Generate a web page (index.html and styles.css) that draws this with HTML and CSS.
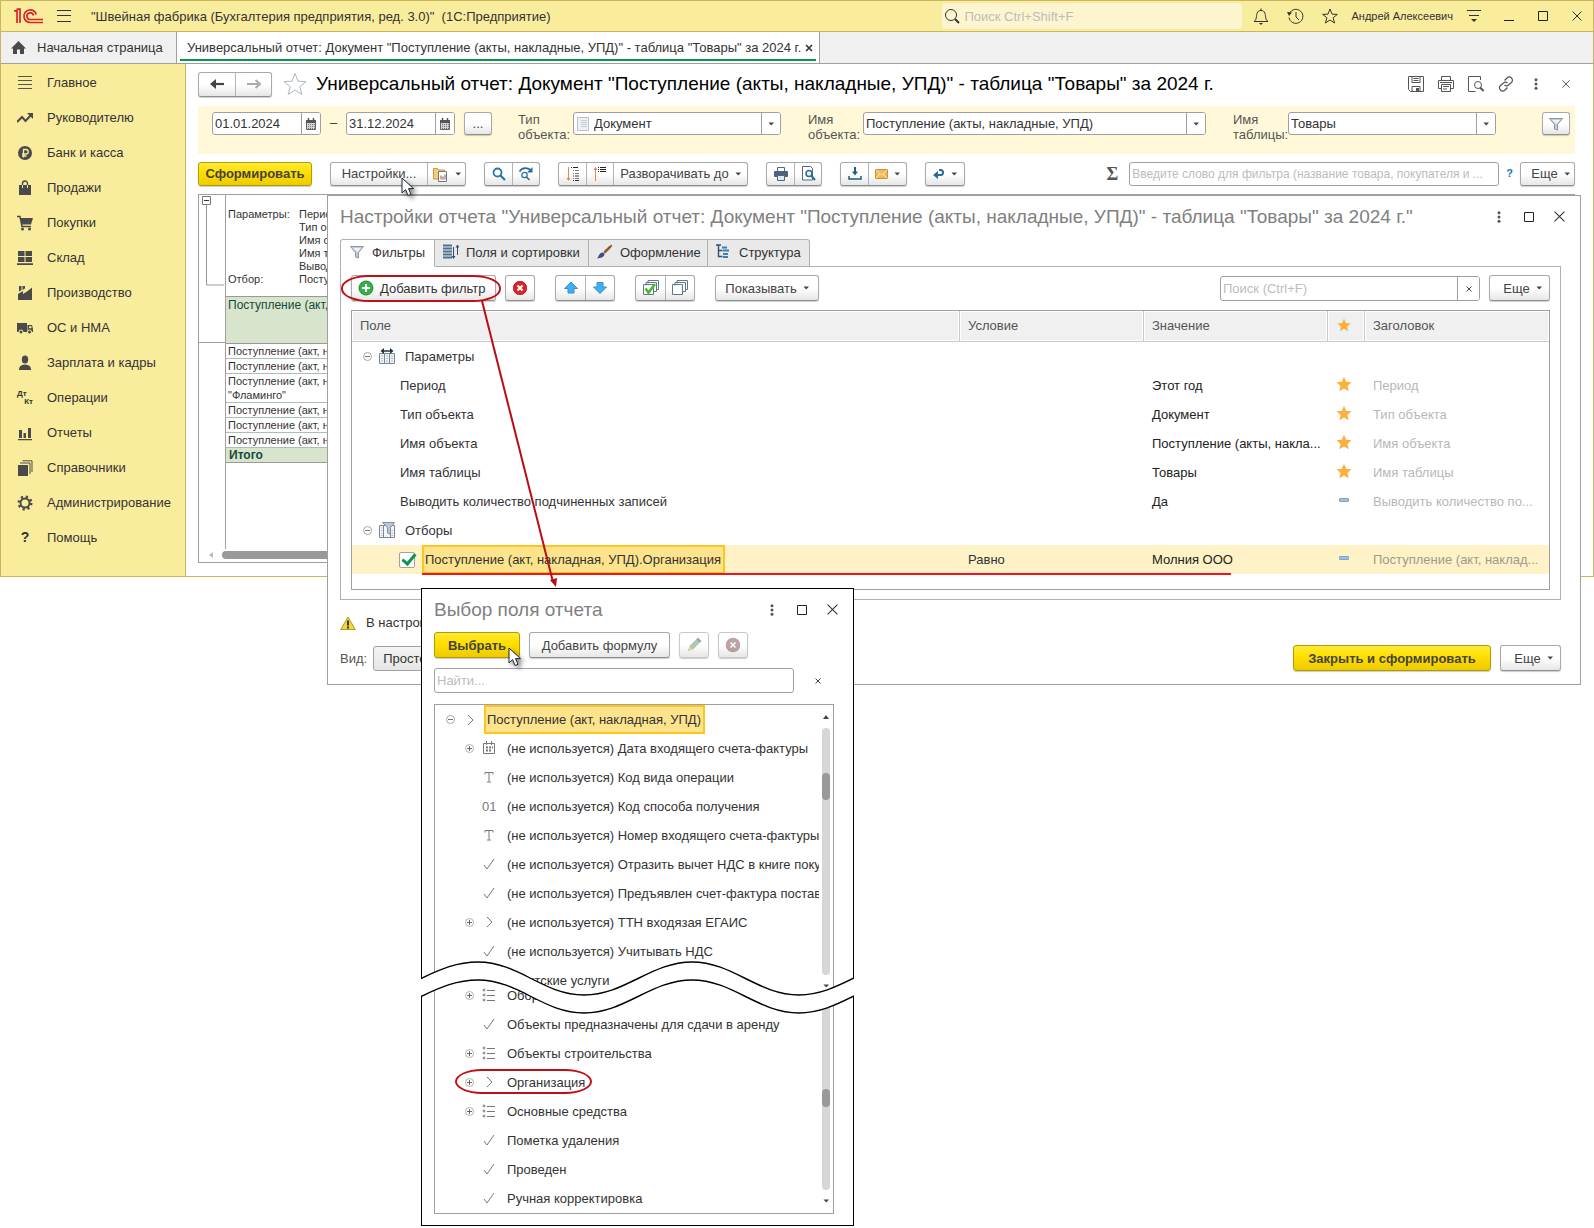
FILE: index.html
```html
<!DOCTYPE html>
<html lang="ru">
<head>
<meta charset="utf-8">
<meta name="viewport" content="width=device-width, initial-scale=1">
<title>Швейная фабрика (Бухгалтерия предприятия, ред. 3.0)</title>
<link rel="stylesheet" href="styles.css">
</head>
<body>
<svg class="sprite" aria-hidden="true">
  <symbol id="caret" viewBox="0 0 6 4"><path d="M.5.500h5.500L3.200 3.500z" fill="#444"/></symbol>
  <symbol id="up" viewBox="0 0 6 4"><path d="M0 4h6L3 0z" fill="#444"/></symbol>
  <symbol id="calendar" viewBox="0 0 12 12"><path d="M1.500 2.500h9v9h-9z" fill="#d4d4d4" stroke="#666"/><path d="M1 2h10v3H1z" fill="#555"/><path d="M3.500 0v3M8.500 0v3" stroke="#555" stroke-width="1.500"/><path d="M3 6.500h7M3 8.500h7M3 10.500h7" stroke="#777" stroke-dasharray="1 1"/></symbol>
  <symbol id="funnel" viewBox="0 0 16 16"><path d="M1.500 2.500h13l-5 6V14l-3-1V8.500z" fill="#c3ccd6" stroke="#8b96a1"/><path d="M4 4h8L8.500 8z" fill="#eef2f6"/></symbol>
  <symbol id="goldstar" viewBox="0 0 16 16"><path d="M8 .8l2.200 5 5.300.500-4 3.600 1.200 5.300L8 12.400l-4.700 2.800 1.200-5.300-4-3.600 5.300-.500z" fill="#fbb040"/></symbol>
  <symbol id="star" viewBox="0 0 24 24"><path d="M12 1.500l3 7.700 8 .4-6.300 5.100 2.200 7.800L12 18l-6.900 4.500 2.200-7.800L1 9.600l8-.4z" fill="none" stroke="currentColor"/></symbol>
  <symbol id="dash" viewBox="0 0 10 4"><rect x=".5" y=".5" width="9" height="3" rx=".5" fill="#9dc3ea" stroke="#7da3c8"/></symbol>
  <symbol id="minus" viewBox="0 0 9 9"><circle cx="4.500" cy="4.500" r="4" fill="none" stroke="#a6a6a6"/><path d="M2 4.500h5" stroke="#777"/></symbol>
  <symbol id="plus" viewBox="0 0 9 9"><circle cx="4.500" cy="4.500" r="4" fill="none" stroke="#b0b0b0"/><path d="M2 4.500h5M4.500 2v5" stroke="#666"/></symbol>
  <symbol id="chevron" viewBox="0 0 14 14"><path d="M5 2l5 5-5 5" fill="none" stroke="#777"/></symbol>
  <symbol id="tick" viewBox="0 0 14 14"><path d="M2 8l3 4 7-10" fill="none" stroke="#777"/></symbol>
  <symbol id="letter" viewBox="0 0 14 14"><path d="M3 4.500v-2h8v2M7 2.500v9M5 12h4" fill="none" stroke="#777"/></symbol>
  <symbol id="list" viewBox="0 0 14 14"><path d="M5 2.500h8M5 7.500h8M5 12.500h8" stroke="#777"/><g fill="none" stroke="#777"><circle cx="2" cy="2" r="1"/><circle cx="2" cy="7" r="1"/><circle cx="2" cy="12" r="1"/></g></symbol>
  <symbol id="date" viewBox="0 0 14 14"><path d="M1.500 2.500h11v10h-11zM4.500 0v4M9.500 0v4" fill="none" stroke="#777"/><path d="M4 6.500h7M4 9.500h5" stroke="#777" stroke-width="2" stroke-dasharray="2 1"/></symbol>
  <symbol id="dots" viewBox="0 0 4 12"><g fill="#555"><circle cx="2" cy="1.700" r="1.500"/><circle cx="2" cy="6" r="1.500"/><circle cx="2" cy="10.300" r="1.500"/></g></symbol>
  <symbol id="box" viewBox="0 0 10 10"><path d="M.5.5h9v9h-9z" fill="none" stroke="#222"/></symbol>
  <symbol id="cross" viewBox="0 0 10 10"><path d="M.5.5l9 9M9.500.5l-9 9" stroke="#333"/></symbol>
  <symbol id="clear" viewBox="0 0 6 6"><path d="M.5.5l5 5M5.500.5l-5 5" stroke="#444"/></symbol>
  <symbol id="bin" viewBox="0 0 16 16"><circle cx="8" cy="8" r="7" fill="#d8252e"/><circle cx="8" cy="8" r="6.600" fill="none" stroke="#b81d25" stroke-width=".8"/><path d="M5.500 5.500l5 5m0-5l-5 5" stroke="#fff" stroke-width="2"/></symbol>
  <symbol id="cursor" viewBox="0 0 13 20"><path d="M1 1v15l3.600-3.400L7 18.500l3-1.200-2.500-5.700h5z" fill="#fff" stroke="#1c2338"/></symbol>
</svg>

<div class="desktop">
  <div class="app">
    <header class="topbar">
      <svg class="logo" viewBox="0 0 30 16"><g fill="none" stroke="#d8232a" stroke-width="1.700"><path d="M0 2.800h3V15M2.500 1.200H6V15"/><path d="M22.300 6.500A6.300 6.300 0 1 0 16.500 14.500H29"/><path d="M19.500 7.500A3.300 3.300 0 1 0 16.500 11.500H29"/></g></svg>
      <button class="plain" aria-label="Меню"><svg width="14" height="12" viewBox="0 0 14 12"><path d="M0 .5h14M0 5.500h14M0 11.500h14" stroke="#333"/></svg></button>
      <span class="apptitle">"Швейная фабрика (Бухгалтерия предприятия, ред. 3.0)"&nbsp; (1С:Предприятие)</span>
      <label class="topsearch"><svg width="16" height="16" viewBox="0 0 16 16"><circle cx="7" cy="7" r="5.500" fill="none" stroke="#333"/><path d="M11 11l4 4" stroke="#333" stroke-width="2"/></svg><input type="text" placeholder="Поиск Ctrl+Shift+F" aria-label="Поиск"></label>
      <button class="plain" aria-label="Уведомления"><svg width="16" height="17" viewBox="0 0 16 17"><path d="M1 13.500c3-2 2-5 3-8C4.800 3 6 2.500 8 2.500s3.200.500 4 3c1 3 0 6 3 8z" fill="none" stroke="#333"/><path d="M8 .5v2" stroke="#333"/><path d="M6 15h4l-2 2z" fill="#333"/></svg></button>
      <button class="plain" aria-label="История"><svg width="17" height="17" viewBox="0 0 17 17"><path d="M2.500 5.500a7 7 0 1 1-.5 4M9 4v5l3 3" fill="none" stroke="#333"/><path d="M0 4l5 .5-3 3.500z" fill="#333"/></svg></button>
      <button class="plain" aria-label="Избранное"><svg width="16" height="16" viewBox="0 0 24 24"><path d="M12 1.500l3 7.700 8 .4-6.300 5.100 2.200 7.800L12 18l-6.900 4.500 2.200-7.800L1 9.600l8-.4z" fill="none" stroke="#333" stroke-width="1.500"/></svg></button>
      <a class="user" href="#">Андрей Алексеевич</a>
      <button class="plain" aria-label="Настройки окна"><svg width="14" height="12" viewBox="0 0 14 12"><path d="M0 .5h14M2 5.500h10" stroke="#333"/><path d="M4 9h6l-3 3z" fill="#333"/></svg></button>
      <div class="winbtns">
        <button class="plain" aria-label="Свернуть"><svg width="10" height="10" viewBox="0 0 10 10"><path d="M0 9.500h10" stroke="#222"/></svg></button>
        <button class="plain" aria-label="Развернуть"><svg width="10" height="10"><use href="#box"/></svg></button>
        <button class="plain" aria-label="Закрыть"><svg width="10" height="10"><use href="#cross"/></svg></button>
      </div>
    </header>

    <nav class="tabs">
      <a class="tab home" href="#"><svg width="15" height="14" viewBox="0 0 15 14"><path d="M7.500 0L0 7.500h2V13h4V8.500h3V13h4V7.500h2z" fill="#4a4a4a"/></svg>Начальная страница</a>
      <a class="tab active" href="#"><span>Универсальный отчет: Документ "Поступление (акты, накладные, УПД)" - таблица "Товары" за 2024 г.</span><svg width="8" height="8" viewBox="0 0 8 8"><path d="M1 1l6 6M7 1L1 7" stroke="#333" stroke-width="1.600"/></svg></a>
    </nav>

    <div class="work">
      <nav class="sidebar">
        <a href="#"><svg viewBox="0 0 16 16"><path d="M1 1.500h14M1 5.500h14M1 9.500h14M1 13.500h14" stroke="#555"/></svg>Главное</a>
        <a href="#"><svg viewBox="0 0 16 16"><path d="M0 12l5-5 3.500 4L14 5" fill="none" stroke="#4a4a4a" stroke-width="2"/><path d="M10 3h6v6z" fill="#4a4a4a"/></svg>Руководителю</a>
        <a href="#"><svg viewBox="0 0 16 16"><circle cx="8" cy="8" r="7" fill="#4a4a4a"/><path d="M6.500 12.500V4.500H9a2.200 2.200 0 0 1 0 4.500H5M5 11h4.500" fill="none" stroke="#faec9d" stroke-width="1.300"/></svg>Банк и касса</a>
        <a href="#"><svg viewBox="0 0 16 16"><path d="M2 5h12v10H2z" fill="#4a4a4a"/><path d="M5.500 5V3.500a2.500 2.500 0 0 1 5 0V5" fill="none" stroke="#4a4a4a" stroke-width="1.400"/><path d="M5.500 5v3M10.500 5v3" stroke="#faec9d"/></svg>Продажи</a>
        <a href="#"><svg viewBox="0 0 16 16"><path d="M0 1.500h3l2 10h9" fill="none" stroke="#4a4a4a" stroke-width="1.500"/><path d="M3 3h13l-2 6.500H4.500z" fill="#4a4a4a"/><circle cx="5.500" cy="14" r="1.500" fill="#4a4a4a"/><circle cx="12.500" cy="14" r="1.500" fill="#4a4a4a"/></svg>Покупки</a>
        <a href="#"><svg viewBox="0 0 16 16"><path d="M1 1h6.500v5H1zM8.500 1H15v5H8.500zM1 7h6.500v5H1zM8.500 7H15v5H8.500zM0 13.300h16V15H0z" fill="#4a4a4a"/></svg>Склад</a>
        <a href="#"><svg viewBox="0 0 16 16"><path d="M1 15V9l5-3v3l4-2.500 5-4V15zM2 1h2.500v4L2 6.500zM5.500 1H8v2.500L5.500 5z" fill="#4a4a4a"/></svg>Производство</a>
        <a href="#"><svg viewBox="0 0 16 16"><path d="M0 3h10v9H0zM10.500 5H15l1 4v3h-5.500z" fill="#4a4a4a"/><path d="M12 6.200h2.500v2H12z" fill="#faec9d"/><circle cx="4" cy="12" r="2" fill="#4a4a4a" stroke="#faec9d"/><circle cx="12.500" cy="12" r="2" fill="#4a4a4a" stroke="#faec9d"/></svg>ОС и НМА</a>
        <a href="#"><svg viewBox="0 0 16 16"><ellipse cx="8" cy="4.500" rx="3.200" ry="4" fill="#4a4a4a"/><path d="M2 15c0-4 2-5 6-5.500 4 .500 6 1.500 6 5.500z" fill="#4a4a4a"/></svg>Зарплата и кадры</a>
        <a href="#"><span class="dtkt"><b>Дт</b><b>Кт</b></span>Операции</a>
        <a href="#"><svg viewBox="0 0 16 16"><path d="M1 14h14v1.300H1zM2 5h3v8H2zM6.500 8h2.500v5H6.500zM11 3h3v10h-3z" fill="#4a4a4a"/></svg>Отчеты</a>
        <a href="#"><svg viewBox="0 0 16 16"><path d="M1 5h10v11H1z" fill="#4a4a4a"/><path d="M3 3h10v11M5.500 .8H15V12" fill="none" stroke="#4a4a4a"/></svg>Справочники</a>
        <a href="#"><svg viewBox="0 0 16 16"><circle cx="8" cy="8" r="4.500" fill="none" stroke="#4a4a4a" stroke-width="2"/><circle cx="8" cy="8" r="6.300" fill="none" stroke="#4a4a4a" stroke-width="2.400" stroke-dasharray="2.200 2.750"/></svg>Администрирование</a>
        <a href="#"><span class="help">?</span>Помощь</a>
      </nav>

      <main class="form">
        <div class="formhead">
          <div class="group nav"><button aria-label="Назад"><svg width="14" height="10" viewBox="0 0 14 10"><path d="M14 5H3" stroke="#444" stroke-width="2.200"/><path d="M6 0v10L0 5z" fill="#444"/></svg></button><button aria-label="Вперед"><svg width="14" height="10" viewBox="0 0 14 10"><path d="M0 5h11" stroke="#aaa" stroke-width="2"/><path d="M8.500 1l4.500 4-4.500 4" fill="none" stroke="#aaa" stroke-width="2"/></svg></button></div>
          <button class="plain fav" aria-label="В избранное"><svg width="24" height="24"><use href="#star"/></svg></button>
          <h1>Универсальный отчет: Документ "Поступление (акты, накладные, УПД)" - таблица "Товары" за 2024 г.</h1>
          <div class="headtools">
            <button class="plain" aria-label="Сохранить"><svg width="16" height="16" viewBox="0 0 16 16"><g fill="none" stroke="#555"><path d="M.5.500h15v15H2.500l-2-2zM4 .5v6h8v-6M5.500 2.500h5M5.500 4.500h5M4 15.500v-5h8v5"/></g><path d="M8 12h3v3H8z" fill="#555"/></svg></button>
            <button class="plain" aria-label="Печать"><svg width="16" height="16" viewBox="0 0 16 16"><g fill="none" stroke="#555"><path d="M3.500 4.500v-4h9v4M3.500 12.500h-3v-8h15v8h-3M3.500 8.500h9v7h-9zM2 6.500h12M5 10.500h6M5 13h4"/></g></svg></button>
            <button class="plain" aria-label="Просмотр"><svg width="16" height="16" viewBox="0 0 16 16"><g fill="none" stroke="#555"><path d="M12.500 4V.500H.500v15h7"/><circle cx="10" cy="9" r="3.500"/></g><path d="M12 11.500l3.500 3.500" stroke="#555" stroke-width="2"/></svg></button>
            <button class="plain" aria-label="Ссылка"><svg width="16" height="16" viewBox="0 0 16 16"><g fill="none" stroke="#555" stroke-width="1.200"><path d="M6.500 4.500L9 2a3 3 0 0 1 4.500 4.500L10.500 9a3 3 0 0 1-4 0"/><path d="M9.500 11.500L7 14a3 3 0 0 1-4.500-4.500L5.500 7a3 3 0 0 1 4 0"/></g></svg></button>
            <button class="plain" aria-label="Еще"><svg width="4" height="12"><use href="#dots"/></svg></button>
            <button class="plain" aria-label="Закрыть"><svg width="8" height="8"><use href="#cross"/></svg></button>
          </div>
        </div>

        <div class="band">
          <div class="field date"><input type="text" value="01.01.2024" aria-label="Начало периода"><span class="drop"><svg width="12" height="12"><use href="#calendar"/></svg></span></div>
          <span class="until">–</span>
          <div class="field date"><input type="text" value="31.12.2024" aria-label="Конец периода"><span class="drop"><svg width="12" height="12"><use href="#calendar"/></svg></span></div>
          <button class="btn small">...</button>
          <label class="lbl" for="otype">Тип объекта:</label>
          <div class="field type"><svg class="doc" width="12" height="14" viewBox="0 0 12 14"><path d="M.5.500h11v13H.500z" fill="#eef0f5" stroke="#b9c3cf"/><path d="M4 3.500h6M4 5.500h6M4 7.500h6M4 9.500h6" stroke="#c3ccd8"/></svg><select id="otype"><option>Документ</option></select><span class="drop"><svg width="6" height="4"><use href="#caret"/></svg></span></div>
          <label class="lbl" for="oname">Имя объекта:</label>
          <div class="field name"><select id="oname"><option>Поступление (акты, накладные, УПД)</option></select><span class="drop"><svg width="6" height="4"><use href="#caret"/></svg></span></div>
          <label class="lbl" for="tname">Имя таблицы:</label>
          <div class="field tbl"><select id="tname"><option>Товары</option></select><span class="drop"><svg width="6" height="4"><use href="#caret"/></svg></span></div>
          <button class="btn small last" aria-label="Фильтр"><svg width="16" height="16"><use href="#funnel"/></svg></button>
        </div>

        <div class="tools">
          <button class="btn primary run">Сформировать</button>
          <div class="group"><button class="w96">Настройки...<svg class="cursor" width="13" height="20"><use href="#cursor"/></svg></button><button class="w38" aria-label="Варианты"><svg width="16" height="16" viewBox="0 0 16 16"><path d="M.5 2.500h4l1 1.500h6v9H.500z" fill="#f3cd78" stroke="#c79a45"/><path d="M5.500 5.500h8v10h-8z" fill="#fff" stroke="#777"/><path d="M8 13.500v-4M10 13.500v-3" stroke="#c33"/><path d="M12 13.500v-5" stroke="#37a"/></svg><svg width="6" height="4"><use href="#caret"/></svg></button></div>
          <div class="group"><button class="w27" aria-label="Найти"><svg width="14" height="14" viewBox="0 0 14 14"><circle cx="5.500" cy="5.500" r="4" fill="none" stroke="#2a74a8" stroke-width="1.800"/><path d="M8.500 8.500l4.500 4.500" stroke="#2a74a8" stroke-width="2.200"/></svg></button><button class="w27" aria-label="Найти далее"><svg width="16" height="16" viewBox="0 0 16 16"><path d="M1.500 5.500c3-4.500 8-4 11-1.500" fill="none" stroke="#2a6a98" stroke-width="1.800"/><path d="M14.500 1v5.500H9z" fill="#2a6a98"/><circle cx="6.500" cy="9" r="2.700" fill="none" stroke="#2a6a98" stroke-width="1.200"/><path d="M8.500 11l3 3" stroke="#2a6a98" stroke-width="1.500"/></svg></button></div>
          <div class="group"><button class="w27" aria-label="Развернуть группы"><svg width="14" height="16" viewBox="0 0 14 16"><path d="M2.500 1v12" stroke="#f0804f"/><path d="M.5 12l2 3 2-3z" fill="#f0804f"/><path d="M5 1.500h1m1 0h5" stroke="#222"/><path d="M7 4.500h1m1 0h4M7 7.500h1m1 0h4M7 12.500h1m1 0h4" stroke="#777"/><path d="M7 10h1m1 0h4M7 14.500h1m1 0h4" stroke="#333"/></svg></button><button class="w27" aria-label="Свернуть группы"><svg width="14" height="16" viewBox="0 0 14 16"><path d="M2.500 3v12" stroke="#f0804f"/><path d="M.5 4l2-3 2 3z" fill="#f0804f"/><path d="M5 1.500h1m1 0h6M5 3.500h1m1 0h6M5 5.500h1m1 0h6" stroke="#222"/></svg></button><button class="w134">Разворачивать до<svg width="6" height="4"><use href="#caret"/></svg></button></div>
          <div class="group"><button class="w27" aria-label="Печать"><svg width="14" height="14" viewBox="0 0 14 14"><path d="M3.500.500h7v4h-7z" fill="#fff" stroke="#567"/><rect y="4" width="14" height="6" rx="1" fill="#4a6480"/><path d="M3.500 8.500h7v5h-7z" fill="#dfe9f3" stroke="#567"/></svg></button><button class="w27" aria-label="Предпросмотр"><svg width="15" height="15" viewBox="0 0 15 15"><path d="M1.500.500h8l2 2V14h-10z" fill="#fff" stroke="#567"/><circle cx="8" cy="7.500" r="3" fill="#e8f2fa" stroke="#2a6a98" stroke-width="1.500"/><path d="M10 9.500l4 4.500" stroke="#2a6a98" stroke-width="2"/></svg></button></div>
          <div class="group"><button class="w27" aria-label="Сохранить"><svg width="14" height="13" viewBox="0 0 14 13"><path d="M7 0v6" stroke="#1f5b87" stroke-width="2"/><path d="M1 9v3h12V9" fill="none" stroke="#1f5b87" stroke-width="1.500"/><path d="M4 4.500h6L7 8.500z" fill="#1f5b87"/></svg></button><button class="w38" aria-label="Отправить"><svg width="13" height="10" viewBox="0 0 13 10"><path d="M.5.500h12v9H.500z" fill="#f3b95d" stroke="#cf8f35"/><path d="M.5.500L6.500 6l6-5.500M.5 9.500L5 5M12.500 9.500L8 5" fill="none" stroke="#fbe3b4"/></svg><svg width="6" height="4"><use href="#caret"/></svg></button></div>
          <div class="group"><button class="w38" aria-label="Назад"><svg width="12" height="12" viewBox="0 0 12 12"><path d="M3 7h4.500a2.500 2.500 0 0 0 0-5H6" fill="none" stroke="#2a6a98" stroke-width="2"/><path d="M5 3v8L0 7z" fill="#2a6a98"/></svg><svg width="6" height="4"><use href="#caret"/></svg></button></div>
          <span class="sigma">Σ</span>
          <div class="field find"><input type="text" placeholder="Введите слово для фильтра (название товара, покупателя и ..." aria-label="Фильтр"></div>
          <a class="qm" href="#">?</a>
          <button class="btn more">Еще<svg width="6" height="4"><use href="#caret"/></svg></button>
        </div>

        <section class="report">
          <div class="outline"><svg width="25" height="148" viewBox="0 0 25 148"><path d="M3.500 1.500h8v8h-8z" fill="#fff" stroke="#777"/><path d="M5 5.500h5" stroke="#333"/><path d="M7.500 10v80H25" fill="none" stroke="#999"/></svg></div>
          <div class="sheet">
            <dl class="params">
              <dt>Параметры:</dt><dd>Период</dd><dd>Тип объекта</dd><dd>Имя объекта</dd><dd>Имя таблицы</dd><dd>Выводить</dd>
              <dt>Отбор:</dt><dd>Поступление</dd>
            </dl>
            <table class="data">
              <thead><tr><th>Поступление (акт, накладная, УПД)</th></tr></thead>
              <tbody>
                <tr><td>Поступление (акт, накладная, УПД)</td></tr>
                <tr><td>Поступление (акт, накладная, УПД)</td></tr>
                <tr><td>Поступление (акт, накладная, УПД)<br>"Фламинго"</td></tr>
                <tr><td>Поступление (акт, накладная, УПД)</td></tr>
                <tr><td>Поступление (акт, накладная, УПД)</td></tr>
                <tr><td>Поступление (акт, накладная, УПД)</td></tr>
              </tbody>
              <tfoot><tr><td>Итого</td></tr></tfoot>
            </table>
          </div>
          <div class="hscroll"><svg width="4" height="6" viewBox="0 0 4 6"><path d="M4 0v6L0 3z" fill="#bbb"/></svg><i></i></div>
        </section>
      </main>
    </div>
  </div>

  <section class="dialog settings" role="dialog" aria-label="Настройки отчета">
    <div class="dlghead">
      <h2>Настройки отчета "Универсальный отчет: Документ "Поступление (акты, накладные, УПД)" - таблица "Товары" за 2024 г."</h2>
      <div class="dlgbtns"><button class="plain" aria-label="Еще"><svg width="4" height="12"><use href="#dots"/></svg></button><button class="plain" aria-label="Развернуть"><svg width="10" height="10"><use href="#box"/></svg></button><button class="plain" aria-label="Закрыть"><svg width="11" height="11"><use href="#cross"/></svg></button></div>
    </div>
    <div class="pages">
      <button class="page on p1"><svg width="16" height="16"><use href="#funnel"/></svg>Фильтры</button>
      <button class="page p2"><svg width="16" height="16" viewBox="0 0 16 16"><path d="M0 1.500h9M0 4.500h9M0 7.500h9M0 10.500h9M0 13.500h9" stroke="#4f7291" stroke-width="1.800"/><path d="M10.500 3v11M14.500 1v10" stroke="#35506e"/><path d="M8.500 12h4l-2 3zM12.500 3.500h4l-2-3z" fill="#35506e"/></svg>Поля и сортировки</button>
      <button class="page p3"><svg width="16" height="16" viewBox="0 0 16 16"><path d="M15 1c1 1-4 6-7 8.500L6.500 8C9 5 14 0 15 1z" fill="#8a5a2c"/><path d="M7.500 9.500c0 4-4 4.500-7.500 5 2-2 2-6 6-6z" fill="#4a4a80"/></svg>Оформление</button>
      <button class="page p4"><svg width="16" height="16" viewBox="0 0 16 16"><path d="M0 1h5M2.500 1v11.500h4M2.500 6.500h4" fill="none" stroke="#35506e" stroke-width="1.400"/><path d="M6 3.500h5M7 6.500h6M7 10h5M7 13h5" stroke="#3f7fb0" stroke-width="2"/></svg>Структура</button>
    </div>
    <div class="panel">
      <div class="cmds">
        <button class="btn add"><svg width="16" height="16" viewBox="0 0 16 16"><circle cx="8" cy="8" r="7" fill="#35b04a" stroke="#238a36"/><path d="M8 4v8M4 8h8" stroke="#fff" stroke-width="2"/></svg>Добавить фильтр<span class="ring"></span><svg class="arrow" width="90" height="290" viewBox="0 0 90 290"><path d="M1 0l71 281" stroke="#b80e14" stroke-width="2"/><path d="M69 279l7-2-1 9z" fill="#b80e14"/></svg></button>
        <button class="btn sq" aria-label="Удалить"><svg width="16" height="16"><use href="#bin"/></svg></button>
        <div class="group"><button aria-label="Вверх"><svg width="16" height="16" viewBox="0 0 16 16"><path d="M8 2l6.500 6.500H11V13H5V8.500H1.500z" fill="#3fb0ef" stroke="#3a8fc4"/></svg></button><button aria-label="Вниз"><svg width="16" height="16" viewBox="0 0 16 16"><path d="M8 13.500L14.500 7H11V2.500H5V7H1.500z" fill="#3fb0ef" stroke="#3a8fc4"/></svg></button></div>
        <div class="group"><button aria-label="Отметить все"><svg width="16" height="16" viewBox="0 0 16 16"><path d="M5 3.500V.500h10.500v9H13M3 5.500v-3h10.500v9H11M.5 4.500h10v10H.500z" fill="#fff" stroke="#5f7890"/><path d="M2.500 8.500l3 4L12 4" fill="none" stroke="#4bb52c" stroke-width="2.600"/></svg></button><button aria-label="Снять отметки"><svg width="16" height="16" viewBox="0 0 16 16"><path d="M5 3.500V.500h10.500v9H13M3 5.500v-3h10.500v9H11M.5 4.500h10v10H.500z" fill="#fff" stroke="#5f7890"/></svg></button></div>
        <button class="btn show">Показывать<svg width="6" height="4"><use href="#caret"/></svg></button>
        <div class="field search"><input type="text" placeholder="Поиск (Ctrl+F)" aria-label="Поиск"><button class="drop" aria-label="Очистить"><svg width="6" height="6"><use href="#clear"/></svg></button></div>
        <button class="btn more2">Еще<svg width="6" height="4"><use href="#caret"/></svg></button>
      </div>
      <table class="filters">
        <colgroup><col><col class="c2"><col class="c3"><col class="c4"><col class="c5"></colgroup>
        <thead><tr><th>Поле</th><th>Условие</th><th>Значение</th><th class="mid"><svg width="14" height="14"><use href="#goldstar"/></svg></th><th>Заголовок</th></tr></thead>
        <tbody>
          <tr><td class="grp"><div><svg width="9" height="9"><use href="#minus"/></svg><svg width="16" height="16" viewBox="0 0 16 16"><path d="M.5 5.500h15V15.500H.500z" fill="#eef2f6" stroke="#7a8896"/><path d="M5.500 5v10M10.500 5v10" stroke="#7a8896"/><path d="M2 8h2m3 0h2m3 0h2M2 10.500h2m3 0h2m3 0h2M2 13h2m3 0h2m3 0h2" stroke="#b4bec8"/><path d="M4 3h8" stroke="#234" stroke-width="1.500"/><path d="M1.500 3L5 0v6zM14.500 3L11 0v6z" fill="#234"/></svg>Параметры</div></td><td></td><td></td><td></td><td></td></tr>
          <tr><td class="sub">Период</td><td></td><td>Этот год</td><td class="mid"><svg width="16" height="16"><use href="#goldstar"/></svg></td><td class="ghost">Период</td></tr>
          <tr><td class="sub">Тип объекта</td><td></td><td>Документ</td><td class="mid"><svg width="16" height="16"><use href="#goldstar"/></svg></td><td class="ghost">Тип объекта</td></tr>
          <tr><td class="sub">Имя объекта</td><td></td><td>Поступление (акты, накла...</td><td class="mid"><svg width="16" height="16"><use href="#goldstar"/></svg></td><td class="ghost">Имя объекта</td></tr>
          <tr><td class="sub">Имя таблицы</td><td></td><td>Товары</td><td class="mid"><svg width="16" height="16"><use href="#goldstar"/></svg></td><td class="ghost">Имя таблицы</td></tr>
          <tr><td class="sub">Выводить количество подчиненных записей</td><td></td><td>Да</td><td class="mid"><svg width="10" height="4"><use href="#dash"/></svg></td><td class="ghost">Выводить количество по...</td></tr>
          <tr><td class="grp"><div><svg width="9" height="9"><use href="#minus"/></svg><svg width="16" height="16" viewBox="0 0 16 16"><path d="M.5 3.500h15V15.500H.500z" fill="#f3f5f8" stroke="#7a8896"/><path d="M4.500 3v12M11.500 3v12" stroke="#7a8896"/><path d="M2 6h1.500M2 8.500h1.500M2 11h1.500M2 13.500h1.500M12.500 8.500H14M12.500 11H14M12.500 13.500H14" stroke="#b4bec8"/><path d="M3.500.500h12l-4 5v7l-3-1.500V5.500z" fill="#b9c6d3" stroke="#7f90a0"/></svg>Отборы</div></td><td></td><td></td><td></td><td></td></tr>
          <tr class="sel"><td class="pick"><div><input type="checkbox" checked aria-label="Использовать отбор"><span class="cell">Поступление (акт, накладная, УПД).Организация</span></div></td><td>Равно</td><td>Молния ООО</td><td class="mid"><svg width="10" height="4"><use href="#dash"/></svg></td><td class="ghost">Поступление (акт, наклад...</td></tr>
        </tbody>
      </table>
    </div>
    <div class="warn"><svg width="16" height="14" viewBox="0 0 16 14"><path d="M8 1l7.300 12.500H.700z" fill="#f2d43c" stroke="#b89a1e"/><path d="M8 4.500v5M8 10.500v2" stroke="#333" stroke-width="2"/></svg>В настройках</div>
    <div class="foot"><label for="view">Вид:</label><select id="view" class="view"><option>Простой</option></select><button class="btn primary close">Закрыть и сформировать</button><button class="btn more2">Еще<svg width="6" height="4"><use href="#caret"/></svg></button></div>
    <i class="underline"></i>
  </section>

  <section class="dialog chooser" role="dialog" aria-label="Выбор поля отчета">
    <div class="dlghead">
      <h2>Выбор поля отчета</h2>
      <div class="dlgbtns"><button class="plain" aria-label="Еще"><svg width="4" height="12"><use href="#dots"/></svg></button><button class="plain" aria-label="Развернуть"><svg width="10" height="10"><use href="#box"/></svg></button><button class="plain" aria-label="Закрыть"><svg width="11" height="11"><use href="#cross"/></svg></button></div>
    </div>
    <div class="cmds2">
      <button class="btn primary pickbtn">Выбрать<svg class="cursor" width="13" height="20"><use href="#cursor"/></svg></button>
      <button class="btn formula">Добавить формулу</button>
      <button class="btn sq off" disabled aria-label="Изменить"><svg width="16" height="16" viewBox="0 0 16 16"><path d="M2 14l1.500-5L10 2.500 13.500 6 7 12.500z" fill="#5f9560"/><path d="M10 2.500l2-2L15.500 4l-2 2z" fill="#35506e"/><path d="M2 14l1.500-5L7 12.500z" fill="#d9a566"/></svg></button>
      <button class="btn sq off" disabled aria-label="Удалить"><svg width="16" height="16" viewBox="0 0 16 16"><circle cx="8" cy="8" r="7.300" fill="#7d4a4e"/><path d="M5.500 5.500l5 5m0-5l-5 5" stroke="#fff" stroke-width="1.600"/></svg></button>
    </div>
    <div class="findrow"><div class="field seek"><input type="text" placeholder="Найти..." aria-label="Найти"></div><button class="plain" aria-label="Очистить"><svg width="6" height="6"><use href="#clear"/></svg></button></div>
    <div class="tree">
      <div class="part upper">
        <ul>
          <li class="root"><svg width="9" height="9"><use href="#minus"/></svg><svg width="14" height="14"><use href="#chevron"/></svg><span class="cell">Поступление (акт, накладная, УПД)</span></li>
          <li><svg width="9" height="9"><use href="#plus"/></svg><svg width="14" height="14"><use href="#date"/></svg>(не используется) Дата входящего счета-фактуры</li>
          <li><i></i><svg width="14" height="14"><use href="#letter"/></svg>(не используется) Код вида операции</li>
          <li><i></i><span class="num">01</span>(не используется) Код способа получения</li>
          <li><i></i><svg width="14" height="14"><use href="#letter"/></svg>(не используется) Номер входящего счета-фактуры</li>
          <li><i></i><svg width="14" height="14"><use href="#tick"/></svg>(не используется) Отразить вычет НДС в книге покупок</li>
          <li><i></i><svg width="14" height="14"><use href="#tick"/></svg>(не используется) Предъявлен счет-фактура поставщика</li>
          <li><svg width="9" height="9"><use href="#plus"/></svg><svg width="14" height="14"><use href="#chevron"/></svg>(не используется) ТТН входязая ЕГАИС</li>
          <li><i></i><svg width="14" height="14"><use href="#tick"/></svg>(не используется) Учитывать НДС</li>
          <li><i></i><i class="blank"></i>Агентские услуги</li>
        </ul>
        <div class="vscroll"><svg width="6" height="4"><use href="#up"/></svg><div class="track"><i class="t1"></i></div><svg width="6" height="4"><use href="#caret"/></svg></div>
      </div>
      <div class="part lower">
        <ul>
          <li class="torn"><svg width="9" height="9"><use href="#plus"/></svg><svg width="14" height="14"><use href="#list"/></svg>Обор</li>
          <li><i></i><svg width="14" height="14"><use href="#tick"/></svg>Объекты предназначены для сдачи в аренду</li>
          <li><svg width="9" height="9"><use href="#plus"/></svg><svg width="14" height="14"><use href="#list"/></svg>Объекты строительства</li>
          <li class="org"><svg width="9" height="9"><use href="#plus"/></svg><svg width="14" height="14"><use href="#chevron"/></svg>Организация<span class="ring"></span></li>
          <li><svg width="9" height="9"><use href="#plus"/></svg><svg width="14" height="14"><use href="#list"/></svg>Основные средства</li>
          <li><i></i><svg width="14" height="14"><use href="#tick"/></svg>Пометка удаления</li>
          <li><i></i><svg width="14" height="14"><use href="#tick"/></svg>Проведен</li>
          <li><i></i><svg width="14" height="14"><use href="#tick"/></svg>Ручная корректировка</li>
        </ul>
        <div class="vscroll"><div class="track"><i class="t2"></i></div><svg width="6" height="4"><use href="#caret"/></svg></div>
      </div>
    </div>
    <svg class="tear" width="433" height="60" viewBox="0 0 433 60"><path d="M0 23C20 14 36 7 57 7C98 7 122 40 163 40C204 40 230 7 271 7C312 7 337 40 378 40C398 40 415 32 433 23V41C415 50 398 58 378 58C337 58 312 25 271 25C230 25 204 58 163 58C122 58 98 25 57 25C36 25 20 32 0 41z" fill="#fff"/><path d="M0 23.500C20 14 36 7 57 7C98 7 122 40 163 40C204 40 230 7 271 7C312 7 337 40 378 40C398 40 415 32 433 23M0 41.500C20 32 36 25 57 25C98 25 122 58 163 58C204 58 230 25 271 25C312 25 337 58 378 58C398 58 415 50 433 41" fill="none" stroke="#000" stroke-width="1.400"/></svg>
  </section>
</div>
</body>
</html>
```
FILE: styles.css
```css
* { box-sizing: border-box; }
body { margin: 0; background: #fff; color: #333; font: 13px/15px "Liberation Sans", Arial, sans-serif; }
h1, h2, ul, dl, dd { margin: 0; padding: 0; font-weight: normal; }
ul { list-style: none; }
a { color: inherit; text-decoration: none; }
button, input, select { font: inherit; color: inherit; margin: 0; }
svg { flex: none; display: block; }
.sprite { position: absolute; width: 0; height: 0; }
.desktop { position: relative; min-height: 100vh; }

/* shared controls */
.plain { border: 0; background: none; padding: 0; display: flex; align-items: center; justify-content: center; }
.btn, .group {
  border: 1px solid #a9a9a9; border-bottom-color: #8f8f8f; border-radius: 3px;
  background: linear-gradient(#fff 50%, #e6e6e6); box-shadow: 0 1px 1px rgba(0,0,0,.2); color: #444;
}
.btn { position: relative; display: flex; align-items: center; justify-content: center; gap: 6px; padding: 0; white-space: nowrap; }
.group { display: flex; }
.group button { position: relative; display: flex; align-items: center; justify-content: center; gap: 6px; border: 0; background: none; padding: 0; white-space: nowrap; }
.group button + button { border-left: 1px solid #b3b3b3; }
.primary { background: linear-gradient(#ffea3a, #ffe000 40%, #eecb00); border-color: #b39b00; font-weight: bold; color: #444; }
.field { display: flex; align-items: center; border: 1px solid #a0a0a0; border-radius: 3px; background: #fff; overflow: hidden; }
.field input, .field select { flex: 1; min-width: 0; height: 100%; border: 0; background: none; padding: 0 2px; outline: 0; appearance: none; color: #333; text-overflow: ellipsis; }
.drop { align-self: stretch; width: 19px; display: flex; align-items: center; justify-content: center; border: 0; border-left: 1px solid #a0a0a0; background: #fff; padding: 0; }
::placeholder { color: #bcbcbc; opacity: 1; }
.cursor { position: absolute; z-index: 5; filter: drop-shadow(3px 3px 2px rgba(0,0,0,.45)); }

/* main window */
.app { border: 1px solid #c9b75f; }
.topbar { display: flex; align-items: center; height: 31px; background: #faec9d; border-bottom: 1px solid #c9b75f; padding: 0 11px 0 13px; }
.logo { width: 30px; height: 16px; margin-right: 13px; }
.apptitle { margin-left: 20px; white-space: nowrap; }
.topsearch { margin-left: auto; margin-right: 11px; width: 300px; height: 26px; display: flex; align-items: center; gap: 4px; background: #fdf5cf; border-radius: 3px; padding-left: 2px; }
.topsearch input { flex: 1; min-width: 0; border: 0; background: none; outline: 0; padding: 0; }
.topbar > .plain { margin: 0; }
.topbar > .plain + .plain { margin-left: 18px; }
.user { margin: 0 14px 0 13px; font-size: 11px; white-space: nowrap; }
.winbtns { display: flex; gap: 24px; margin-left: 23px; }
.tabs { display: flex; height: 32px; background: #f0f0f0; border-bottom: 1px solid #a0a0a0; }
.tab { display: flex; align-items: center; white-space: nowrap; border-right: 1px solid #a0a0a0; }
.home { width: 176px; padding-left: 10px; gap: 11px; }
.active { position: relative; background: #fff; padding: 0 6px 0 10px; gap: 4px; }
.active::after { content: ""; position: absolute; left: 3px; right: 3px; bottom: 2px; height: 2px; background: #0a9550; }
.work { display: flex; }
.sidebar { width: 185px; background: #faec9d; border-right: 1px solid #c9b75f; padding: 1px 0 21px; }
.sidebar a { display: flex; align-items: center; gap: 14px; height: 35px; padding-left: 16px; white-space: nowrap; }
.sidebar svg { width: 16px; height: 16px; }
.dtkt { width: 16px; display: flex; flex-direction: column; font-size: 8px; line-height: 8px; }
.dtkt b + b { align-self: flex-end; }
.help { width: 16px; text-align: center; font-weight: bold; font-size: 14px; }
.form { flex: 1; min-width: 0; padding: 0 18px 13px 12px; display: flex; flex-direction: column; }
.formhead { display: flex; align-items: center; height: 42px; padding-bottom: 2px; }
.nav { height: 25px; }
.nav button { width: 36px; }
.fav { margin: 0 9px 0 11px; color: #b0b6bd; }
h1 { font-size: 19px; line-height: 24px; color: #000; white-space: nowrap; }
.headtools { display: flex; align-items: center; gap: 14px; margin: 0 1px 0 auto; }
.headtools button { width: 16px; }
.band { display: flex; align-items: flex-start; height: 48px; padding: 6px 5px 0 14px; background: #fff9d9; }
.band .field { height: 23px; }
.date { width: 109px; }
.until { width: 25px; text-align: center; line-height: 22px; }
.small { width: 28px; height: 23px; margin-left: 9px; }
.last { margin-left: auto; }
.lbl { width: 55px; color: #555; white-space: normal; }
.small + .lbl { margin-left: 26px; }
.field + .lbl { margin-left: 27px; }
.type { width: 208px; }
.doc { margin-left: 3px; }
.type select { padding-left: 5px; }
.name { flex: 1 1 343px; max-width: 343px; }
.tbl { width: 208px; }
.tools { display: flex; align-items: center; height: 40px; padding-bottom: 1px; gap: 18px; }
.tools .btn, .tools .group, .find { height: 24px; }
.run { width: 114px; }
.w27 { width: 27px; } .w38 { width: 38px; } .w96 { width: 96px; } .w134 { width: 134px; }
.w96 .cursor { left: 70px; top: 14px; }
.sigma { margin-left: auto; margin-right: -7px; font: bold 18px/20px "Liberation Serif", serif; color: #555; }
.find { width: 370px; font-size: 12px; }
.qm { margin: 0 -11px; font-size: 11px; font-weight: bold; color: #1b78b8; }
.more { width: 55px; }
.btn.more, .btn.more2 { padding-left: 6px; }

.report { position: relative; flex: 1; display: flex; border: 1px solid #a0a0a0; }
.outline { width: 26px; height: 148px; border-bottom: 1px solid #a0a0a0; }
.sheet { flex: 1; min-width: 0; margin-bottom: 13px; border-left: 1px solid #a0a0a0; }
.params { height: 101px; padding: 12px 0 0 2px; display: grid; grid-template-columns: 71px 1fr; grid-auto-rows: 13px; font-size: 11px; line-height: 14px; }
.params dd { grid-column: 2; }
.data { width: 100%; border-collapse: collapse; font-size: 11px; line-height: 14px; }
.data th { height: 47px; padding: 1px 2px; text-align: left; vertical-align: top; font-weight: normal; font-size: 12px; background: #d8e5cc; color: #144b3c; border-top: 1px solid #999; border-bottom: 1px solid #999; }
.data td { padding: 0 2px; border-bottom: 1px solid #a9bfb8; }
.data tfoot td { height: 15px; padding: 0 3px; font-size: 12px; font-weight: bold; background: #d8e5cc; color: #144b3c; border: solid #999; border-width: 1px 0; }
.hscroll { position: absolute; left: 10px; right: 4px; bottom: 3px; display: flex; align-items: center; gap: 9px; }
.hscroll i { flex: 1; height: 8px; border-radius: 4px; background: #999; }

/* dialogs */
.dialog { position: absolute; background: #fff; border: 1px solid #a0a0a0; padding: 0 19px 0 12px; }
.dlghead { display: flex; align-items: center; justify-content: space-between; height: 43px; padding-bottom: 2px; }
h2 { font-size: 19px; line-height: 24px; color: #808080; white-space: nowrap; }
.dlgbtns { display: flex; align-items: center; gap: 20px; margin-right: -4px; }
.dlgbtns button:first-child { margin-right: 3px; }
.settings { left: 327px; right: 13px; top: 195px; height: 490px; }
.pages { display: flex; height: 27px; position: relative; z-index: 1; }
.page { height: 28px; display: flex; align-items: center; gap: 7px; padding: 0 0 2px 8px; border: 1px solid #b0b0b0; border-left-width: 0; background: #e9e9e9; white-space: nowrap; color: #333; }
.page.on { border-left-width: 1px; border-bottom-color: #fff; background: #fff; border-radius: 3px 0 0 0; }
.page:last-child { border-radius: 0 3px 0 0; }
.p1 { width: 95px; } .p2 { width: 154px; } .p3 { width: 119px; } .p4 { width: 102px; }
.panel { border: 1px solid #b0b0b0; padding: 8px 10px 9px; }
.cmds { display: flex; gap: 20px; height: 26px; margin-bottom: 9px; }
.cmds .group button { width: 29px; }
.add { width: 145px; margin-right: -11px; color: #333; }
.btn.add { justify-content: flex-start; padding-left: 6px; }
.sq { width: 30px; height: 26px; }
.show { width: 104px; }
.search { width: 260px; height: 25px; margin: 1px -11px 0 auto; }
.search .drop { width: 22px; }
.more2 { width: 61px; }
.ring { position: absolute; border: 2px solid #c01017; border-radius: 28px / 13px; }
.add .ring { left: -11px; top: -1px; width: 160px; height: 27px; }
.arrow { position: absolute; left: 129px; top: 25px; z-index: 3; pointer-events: none; }
.filters { width: 100%; table-layout: fixed; border-collapse: separate; border-spacing: 0; border: 1px solid #a0a0a0; margin: 0; padding-bottom: 15px; }
.c2, .c3 { width: 184px; } .c4 { width: 37px; } .c5 { width: 185px; }
.filters th { height: 31px; padding: 0 8px 2px; text-align: left; font-weight: normal; color: #555; background: #f0f0f0; border: solid #c9c9c9; border-width: 0 0 1px 0; box-shadow: inset 0 0 0 1px #fff; }
.filters th + th { border-left-width: 1px; }
.filters td { height: 29px; padding: 0 4px 1px 9px; overflow: hidden; white-space: nowrap; }
.filters td:nth-child(3) { color: #222; }
.filters .mid { padding: 0 4px 3px 0; }
.filters .mid svg { margin: 0 auto; }
.filters td.grp { padding-left: 11px; }
.grp div { display: flex; align-items: center; }
.grp svg:first-child { margin-right: 7px; }
.grp svg + svg { margin-right: 10px; }
.filters td.sub { padding-left: 48px; }
.filters td.ghost { color: #b8b8b8; }
.sel { background: #fef2c6; }
.filters .sel td.ghost { color: #9e9a8c; }
.filters td.pick { padding: 0 0 0 47px; }
.pick div { display: flex; align-items: center; gap: 7px; }
.pick input { appearance: none; width: 16px; height: 16px; margin: 0; border: 1px solid #a0a0a0; border-radius: 2px; background: #fff; position: relative; }
.pick input::after { content: ""; position: absolute; left: 5px; top: -2px; width: 5px; height: 11px; border: solid #0a9550; border-width: 0 3px 3px 0; transform: rotate(40deg); }
.cell { display: flex; align-items: center; height: 29px; padding: 0 2px 1px 1px; border: 2px solid #fdc61f; background: #fde48c; white-space: nowrap; }
.underline { position: absolute; left: 94px; top: 377px; width: 809px; height: 2px; background: #f0141c; }
.warn { display: flex; align-items: center; gap: 10px; height: 45px; }
.foot { display: flex; align-items: center; gap: 9px; height: 26px; }
.foot label { color: #555; margin-right: -3px; }
.view { appearance: none; height: 25px; width: 120px; padding: 0 9px; border: 1px solid #a0a0a0; border-radius: 3px; background: linear-gradient(#f4f4f4, #e6e6e6); }
.foot .btn { height: 26px; }
.close { width: 198px; margin-left: auto; }

.chooser { left: 421px; top: 588px; width: 433px; border-color: #000; padding-bottom: 11px; }
.cmds2 { display: flex; gap: 9px; height: 26px; }
.pickbtn { width: 86px; }
.pickbtn .cursor { left: 73px; top: 14px; }
.formula { width: 141px; }
.off svg { opacity: .5; }
.off { border-color: #c8c8c8; }
.findrow { display: flex; align-items: center; gap: 21px; margin: 10px 0 11px; }
.seek { width: 360px; height: 25px; }
.tree { border: 1px solid #a0a0a0; }
.part { display: flex; overflow: hidden; }
.upper { height: 283px; }
.part ul { flex: 1; min-width: 0; overflow: hidden; }
.part li { display: flex; align-items: center; height: 29px; padding: 0 0 1px 30px; white-space: nowrap; position: relative; }
.part li > i { flex: none; }
.part li > svg:first-child, .part li > i:first-child { width: 9px; margin-right: 8px; }
.part li > svg + svg, .part li > i + svg, .num, .blank { width: 14px; margin-right: 11px; }
.part li.root { padding: 0 0 0 11px; }
.part li.root svg + svg { margin-right: 7px; }
.num { color: #777; }
.part li.torn { height: 22px; padding-bottom: 8px; }
.org .ring { left: 20px; top: 1px; width: 137px; height: 25px; }
.vscroll { width: 14px; padding: 10px 3px; display: flex; flex-direction: column; align-items: center; gap: 9px; }
.track { position: relative; flex: 1; width: 8px; border-radius: 4px; background: #d6d6d6; }
.track i { position: absolute; left: 0; width: 8px; border-radius: 4px; background: #999; }
.t1 { top: 45px; height: 27px; }
.t2 { top: 91px; height: 18px; }
.upper .vscroll { padding-bottom: 0; }
.tear { position: absolute; left: -1px; top: 366px; }
```
